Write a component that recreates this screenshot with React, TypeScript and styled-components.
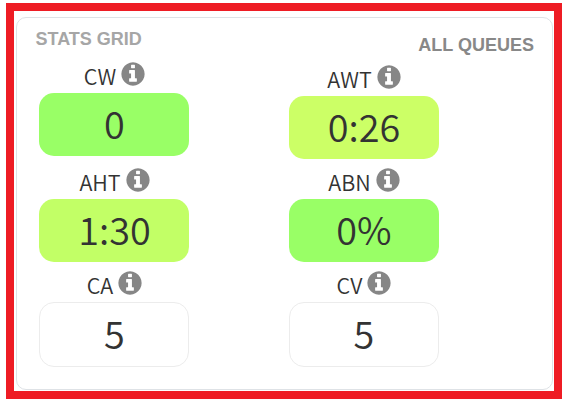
import React from 'react';
import styled, { createGlobalStyle } from 'styled-components';

const GlobalStyle = createGlobalStyle`
  * { box-sizing: border-box; }
  body { margin: 0; background: #fff; }
`;

const Frame = styled.main`
  width: 556px;
  height: 396px;
  margin: 3px 0 0 6px;
  border: 8px solid #ee1c24;
  padding: 6px 1px 1px 2px;
  background: #fff;
`;

const Card = styled.section`
  width: 537px;
  height: 373px;
  display: grid;
  grid-template-columns: 250px 1fr;
  grid-template-rows: 44px 1fr;
  padding-left: 22px;
  border: 1px solid #dee2e6;
  border-radius: 10px;
  color: #333;
`;

const Title = styled.h2<{ $side: 'left' | 'right' }>`
  margin: ${(p) => (p.$side === 'left' ? '0 0 0 -3.5px' : '0')};
  padding: ${(p) => (p.$side === 'left' ? '11px 0 0' : '17px 18px 0 0')};
  text-align: ${(p) => p.$side};
  font: bold 18px/20px "Liberation Sans", Arial, sans-serif;
  color: ${(p) => (p.$side === 'left' ? '#a6a6a6' : '#888')};
`;

const Column = styled.div<{ $offset: number; $nudge: number }>`
  --nudge: ${(p) => p.$nudge}px;
  width: 150px;
  padding-top: ${(p) => p.$offset}px;
`;

const Stat = styled.div<{ $gap: number }>`
  margin-bottom: ${(p) => p.$gap}px;
`;

const Label = styled.div`
  display: flex;
  justify-content: center;
  height: 31px;
  gap: 5px;
  padding-left: var(--nudge);
  font: 350 21.5px/28px "Noto Sans CJK JP", "Noto Sans", sans-serif;
`;

const Icon = styled.svg`
  width: 24px;
  height: 24px;
  flex: none;
  fill: #868686;
`;

const InfoIcon = () => (
  <Icon viewBox="-24 -24 1584 1584" aria-hidden="true">
    <path d="M1024 1248v-160q0-14-9-23t-23-9h-96v-512q0-14-9-23t-23-9h-320q-14 0-23 9t-9 23v160q0 14 9 23t23 9h96v320h-96q-14 0-23 9t-9 23v160q0 14 9 23t23 9h448q14 0 23-9t9-23zM896 352v-160q0-14-9-23t-23-9h-192q-14 0-23 9t-9 23v160q0 14 9 23t23 9h192q14 0 23-9t9-23zM1536 768q0 209-103 385.5t-279.5 279.5-385.5 103-385.5-103-279.5-279.5-103-385.5 103-385.5 279.5-279.5 385.5-103 385.5 103 279.5 279.5 103 385.5z" />
  </Icon>
);

const Value = styled.div<{ $fill?: string }>`
  height: ${(p) => (p.$fill ? 63 : 65)}px;
  border: ${(p) => (p.$fill ? '0' : '1px solid #ececec')};
  border-radius: 15px;
  background: ${(p) => p.$fill ?? '#fff'};
  padding-left: var(--nudge);
  text-align: center;
  font: 350 37.8px/60px "Noto Sans CJK JP", "Noto Sans", sans-serif;
`;

interface StatItem {
  label: string;
  value: string;
  fill?: string;
  gap: number;
}

const left: StatItem[] = [
  { label: 'CW', value: '0', fill: '#99ff66', gap: 12 },
  { label: 'AHT', value: '1:30', fill: '#c2ff66', gap: 9 },
  { label: 'CA', value: '5', gap: 0 },
];

const right: StatItem[] = [
  { label: 'AWT', value: '0:26', fill: '#ccff66', gap: 9 },
  { label: 'ABN', value: '0%', fill: '#99ff66', gap: 9 },
  { label: 'CV', value: '5', gap: 0 },
];

const StatColumn = ({ items, offset, nudge }: { items: StatItem[]; offset: number; nudge: number }) => (
  <Column $offset={offset} $nudge={nudge}>
    {items.map((s) => (
      <Stat key={s.label} $gap={s.gap}>
        <Label>
          <span>{s.label}</span>
          <InfoIcon />
        </Label>
        <Value $fill={s.fill}>{s.value}</Value>
      </Stat>
    ))}
  </Column>
);

export default function App() {
  return (
    <>
      <GlobalStyle />
      <Frame>
        <Card>
          <Title $side="left">STATS GRID</Title>
          <Title $side="right">ALL QUEUES</Title>
          <StatColumn items={left} offset={0} nudge={1} />
          <StatColumn items={right} offset={3} nudge={0} />
        </Card>
      </Frame>
    </>
  );
}
